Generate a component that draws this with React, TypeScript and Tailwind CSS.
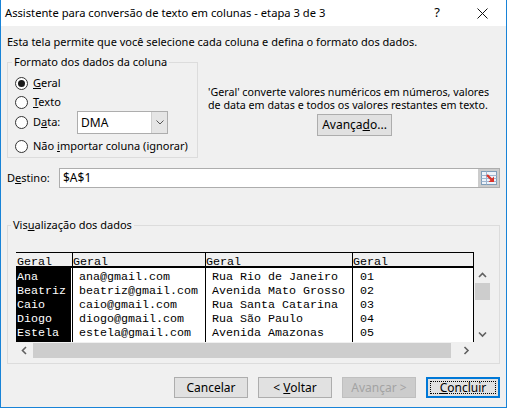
import React from "react";

const Radio = ({ checked }: { checked?: boolean }) => (
  <span className="w-[13px] h-[13px] rounded-full border border-[#333333] bg-white flex items-center justify-center shrink-0">
    {checked && <span className="w-[7px] h-[7px] rounded-full bg-[#1a1a1a]" />}
  </span>
);

const Chevron = ({ dir }: { dir: "up" | "down" | "left" | "right" }) => {
  const pts: Record<string, string> = {
    up: "1,5 4.5,1.5 8,5",
    down: "1,1.5 4.5,5 8,1.5",
    left: "5,1 1.5,4.5 5,8",
    right: "1.5,1 5,4.5 1.5,8",
  };
  const horiz = dir === "up" || dir === "down";
  return (
    <svg width={horiz ? 9 : 7} height={horiz ? 7 : 9} viewBox={horiz ? "0 0 9 7" : "0 0 7 9"}>
      <polyline points={pts[dir]} fill="none" stroke="#606060" strokeWidth="1.6" />
    </svg>
  );
};

const Btn = ({ children, disabled, focused }: { children: React.ReactNode; disabled?: boolean; focused?: boolean }) => (
  <div
    className={
      "w-[74px] h-[21px] flex items-center justify-center text-[12px] " +
      (disabled
        ? "bg-[#cccccc] border border-[#bfbfbf] text-[#a3a3a3]"
        : focused
        ? "bg-[#e1e1e1] border-2 border-[#0078d7] text-black"
        : "bg-[#e1e1e1] border border-[#adadad] text-black")
    }
  >
    {focused ? (
      <div className="w-[66px] h-[13px] border border-dotted border-black flex items-center justify-center">{children}</div>
    ) : (
      children
    )}
  </div>
);

const rows = [
  ["Ana", "ana@gmail.com", "Rua Rio de Janeiro", "01"],
  ["Beatriz", "beatriz@gmail.com", "Avenida Mato Grosso", "02"],
  ["Caio", "caio@gmail.com", "Rua Santa Catarina", "03"],
  ["Diogo", "diogo@gmail.com", "Rua São Paulo", "04"],
  ["Estela", "estela@gmail.com", "Avenida Amazonas", "05"],
];

export default function App() {
  const mono = "font-['Liberation_Mono',monospace] text-[11.67px] leading-[14px] whitespace-pre";
  return (
    <div className="w-[507px] h-[408px] bg-[#f0f0f0] border-x border-b border-[#1883d7] flex flex-col font-['Noto_Sans',sans-serif] text-[11px] text-black overflow-hidden">
      {/* Title bar */}
      <div className="h-[26px] bg-white flex items-center shrink-0">
        <span className="pl-[4px] text-[11.2px]">Assistente para conversão de texto em colunas - etapa 3 de 3</span>
        <div className="flex-1" />
        <span className="text-[13px] w-[10px] text-center mr-[35px]">?</span>
        <svg width="11" height="11" viewBox="0 0 11 11" className="mr-[18px]">
          <line x1="0.5" y1="0.5" x2="10.5" y2="10.5" stroke="#111" strokeWidth="1" />
          <line x1="10.5" y1="0.5" x2="0.5" y2="10.5" stroke="#111" strokeWidth="1" />
        </svg>
      </div>

      {/* Body */}
      <div className="px-[6px] flex flex-col">
        <p className="mt-[8px] h-[16px] leading-[16px]">
          Esta tela permite que você selecione cada coluna e defina o formato dos dados.
        </p>

        <div className="flex mt-[4px]">
          <fieldset className="w-[191px] border border-[#dcdcdc]">
            <legend className="ml-[4px] px-[2px] leading-[16px]">Formato dos dados da coluna</legend>
            <div className="pl-[7px] pb-[3px] flex flex-col">
              <div className="mt-[5px] h-[16px] flex items-center gap-[5px]">
                <Radio checked />
                <span>
                  <u className="underline-offset-[1px]">G</u>eral
                </span>
              </div>
              <div className="mt-[3px] h-[16px] flex items-center gap-[5px]">
                <Radio />
                <span>
                  <u className="underline-offset-[1px]">T</u>exto
                </span>
              </div>
              <div className="mt-[1px] h-[23px] flex items-center gap-[5px]">
                <Radio />
                <span className="w-[39px]">
                  D<u className="underline-offset-[1px]">a</u>ta:
                </span>
                <div className="w-[91px] h-[23px] border border-[#adadad] bg-white flex">
                  <span className="flex-1 pl-[3px] leading-[21px] text-[12px]">DMA</span>
                  <span className="w-[16px] h-full bg-[#e5e5e5] border-l border-[#cfcfcf] flex items-center justify-center">
                    <svg width="8" height="5" viewBox="0 0 8 5">
                      <polyline points="0.5,0.5 4,4 7.5,0.5" fill="none" stroke="#555" strokeWidth="1" />
                    </svg>
                  </span>
                </div>
              </div>
              <div className="mt-[4px] h-[16px] flex items-center gap-[5px]">
                <Radio />
                <span>
                  Não <u className="underline-offset-[1px]">i</u>mportar coluna (ignorar)
                </span>
              </div>
            </div>
          </fieldset>

          <div className="ml-[10px] mt-[32px] flex flex-col text-[10.7px]">
            <p className="leading-[13px]">'Geral' converte valores numéricos em números, valores</p>
            <p className="leading-[13px]">de data em datas e todos os valores restantes em texto.</p>
            <div className="mt-[2px] ml-[109px] w-[75px] h-[22px] bg-[#e1e1e1] border border-[#adadad] flex items-center justify-center text-[12px]">
              <span>
                Avança<u className="underline-offset-[1px]">d</u>o...
              </span>
            </div>
          </div>
        </div>

        {/* Destino */}
        <div className="mt-[10px] h-[20px] flex items-center">
          <span className="w-[52px]">
            D<u className="underline-offset-[1px]">e</u>stino:
          </span>
          <div className="flex-1 h-[20px] border border-[#adadad] bg-white flex">
            <span className="flex-1 pl-[3px] leading-[18px] text-[12px]">$A$1</span>
            <span className="w-[21px] h-full bg-[#cccccc] flex items-center justify-center">
              <svg width="16" height="14" viewBox="0 0 16 14">
                <rect x="0.5" y="0.5" width="15" height="13" fill="#eef3fa" stroke="#7f9db9" />
                <line x1="0.5" y1="4.5" x2="15.5" y2="4.5" stroke="#9fb6d0" />
                <line x1="0.5" y1="7.5" x2="15.5" y2="7.5" stroke="#9fb6d0" />
                <line x1="0.5" y1="10.5" x2="15.5" y2="10.5" stroke="#9fb6d0" />
                <line x1="5.5" y1="0.5" x2="5.5" y2="13.5" stroke="#9fb6d0" />
                <line x1="6" y1="4" x2="10.5" y2="8.5" stroke="#d9342b" strokeWidth="2.4" />
                <polygon points="13,11 7.5,11 13,5.5" fill="#d9342b" />
              </svg>
            </span>
          </div>
        </div>

        {/* Preview */}
        <fieldset className="mt-[29px] w-[493px] border border-[#dcdcdc]">
          <legend className="ml-[3px] px-[2px] leading-[16px]">
            Vis<u className="underline-offset-[1px]">u</u>alização dos dados
          </legend>
          <div className="mt-[19px] pl-[8px] pb-[5px] flex flex-col">
            <div className="flex">
              <div className="w-[458px] flex flex-col">
                {/* header */}
                <div className={"flex border-t border-b-2 border-black h-[16px] " + mono}>
                  <div className="w-[57px] border-r border-black pl-[1px] leading-[18px]">Geral</div>
                  <div className="w-[133px] border-r border-black leading-[18px]">Geral</div>
                  <div className="w-[147px] border-r border-black leading-[18px]">Geral</div>
                  <div className="w-[121px] border-r border-black leading-[18px]">Geral</div>
                </div>
                {/* data */}
                <div className={"flex h-[74px] bg-white " + mono}>
                  <div className="w-[57px] border-r border-black">
                    <div className="w-[55px] h-full bg-black text-white pl-[1px] pt-[2px]">
                      {rows.map((r) => (
                        <div key={r[0]} className="h-[14px]">{r[0]}</div>
                      ))}
                    </div>
                  </div>
                  <div className="w-[133px] border-r border-black pl-[6px] pt-[2px]">
                    {rows.map((r) => (
                      <div key={r[1]} className="h-[14px]">{r[1]}</div>
                    ))}
                  </div>
                  <div className="w-[147px] border-r border-black pl-[6px] pt-[2px]">
                    {rows.map((r) => (
                      <div key={r[2]} className="h-[14px]">{r[2]}</div>
                    ))}
                  </div>
                  <div className="w-[121px] border-r border-black pl-[7px] pt-[2px]">
                    {rows.map((r) => (
                      <div key={r[3]} className="h-[14px]">{r[3]}</div>
                    ))}
                  </div>
                </div>
              </div>
              {/* vertical scrollbar */}
              <div className="w-[16px] flex flex-col pl-[1px]">
                <div className="h-[16px]" />
                <div className="h-[74px] flex flex-col">
                  <div className="h-[15px] flex items-center justify-center">
                    <Chevron dir="up" />
                  </div>
                  <div className="h-[17px] bg-[#cdcdcd]" />
                  <div className="flex-1" />
                  <div className="h-[15px] flex items-center justify-center">
                    <Chevron dir="down" />
                  </div>
                </div>
              </div>
            </div>
            {/* horizontal scrollbar */}
            <div className="flex h-[16px] pt-[1px]">
              <div className="w-[458px] flex">
                <div className="w-[17px] flex items-center justify-center">
                  <Chevron dir="left" />
                </div>
                <div className="w-[418px] bg-[#cdcdcd]" />
                <div className="flex-1" />
                <div className="w-[15px] flex items-center justify-center">
                  <Chevron dir="right" />
                </div>
              </div>
            </div>
          </div>
        </fieldset>

        {/* Buttons */}
        <div className="mt-[13px] flex justify-end gap-[10px]">
          <Btn>Cancelar</Btn>
          <Btn>
            <span>
              &lt; <u className="underline-offset-[1px]">V</u>oltar
            </span>
          </Btn>
          <Btn disabled>Avançar &gt;</Btn>
          <Btn focused>
            <span>
              <u className="underline-offset-[1px]">C</u>oncluir
            </span>
          </Btn>
        </div>
      </div>
    </div>
  );
}
